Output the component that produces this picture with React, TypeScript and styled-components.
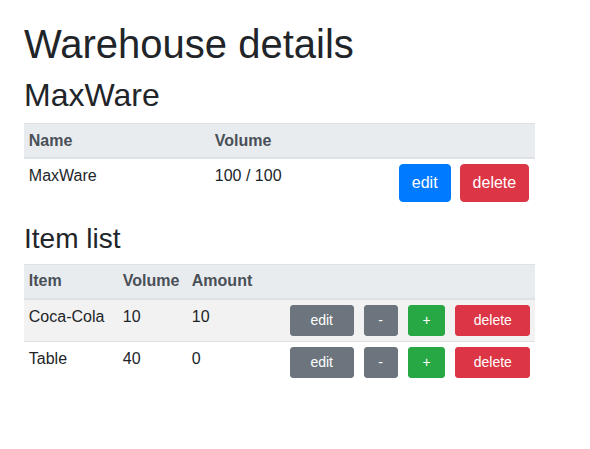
import React from 'react'
import styled, { createGlobalStyle } from 'styled-components'

const GlobalStyle = createGlobalStyle`
	body {
		margin: 0;
		background: #fff;
		color: #212529;
		font-family: 'Liberation Sans', Arial, sans-serif;
		font-size: 16px;
		line-height: 1.5;
	}
`

const COLORS = {
	primary: '#007bff',
	danger: '#dc3545',
	success: '#28a745',
	secondary: '#6c757d',
}

type Variant = keyof typeof COLORS

const Page = styled.main`
	width: 511px;
	padding: 19.5px 0 0 24px;
`

const Title = styled.h1`
	margin: 0 0 8px;
	font-size: 40px;
	font-weight: 500;
	line-height: 1.2;
`

const SubTitle = styled.h2`
	margin: 0 0 9px;
	font-size: 32px;
	font-weight: 500;
	line-height: 1.2;
`

const SectionTitle = styled.h3`
	margin: 0 0 8px;
	font-size: 28px;
	font-weight: 500;
	line-height: 1.2;
`

const Table = styled.table`
	width: 100%;
	margin-bottom: 15px;
	border-collapse: collapse;
	table-layout: fixed;
`

const Th = styled.th`
	padding: 4.8px;
	border-top: 1px solid #dee2e6;
	border-bottom: 2px solid #dee2e6;
	background: #e9ecef;
	color: #495057;
	font-weight: bold;
	text-align: left;
	vertical-align: bottom;
`

const Row = styled.tr<{ $striped?: boolean }>`
	background: ${(p) => (p.$striped ? 'rgba(0, 0, 0, 0.05)' : 'transparent')};
`

const Td = styled.td`
	padding: 4.8px;
	border-top: 1px solid #dee2e6;
	vertical-align: top;
`

const Actions = styled.div<{ $gap: number }>`
	display: flex;
	gap: ${(p) => p.$gap}px;
`

const Button = styled.button<{ $variant: Variant; $small?: boolean; $w?: number }>`
	box-sizing: border-box;
	width: ${(p) => (p.$w ? `${p.$w}px` : 'auto')};
	padding: ${(p) => (p.$small ? '4px 8px' : '6px 12px')};
	border: 1px solid ${(p) => COLORS[p.$variant]};
	border-radius: ${(p) => (p.$small ? '3px' : '4px')};
	background: ${(p) => COLORS[p.$variant]};
	color: #fff;
	font-family: inherit;
	font-size: ${(p) => (p.$small ? '14px' : '16px')};
	line-height: 1.5;
	text-align: center;
	cursor: pointer;
`

const items = [
	{ name: 'Coca-Cola', volume: 10, amount: 10 },
	{ name: 'Table', volume: 40, amount: 0 },
]

export default function App() {
	return (
		<>
			<GlobalStyle />
			<Page>
				<Title>Warehouse details</Title>
				<SubTitle>MaxWare</SubTitle>

				<Table>
					<colgroup>
						<col style={{ width: 186 }} />
						<col style={{ width: 184 }} />
						<col />
					</colgroup>
					<thead>
						<tr>
							<Th>Name</Th>
							<Th>Volume</Th>
							<Th />
						</tr>
					</thead>
					<tbody>
						<Row>
							<Td>MaxWare</Td>
							<Td>100 / 100</Td>
							<Td>
								<Actions $gap={9}>
									<Button $variant='primary'>edit</Button>
									<Button $variant='danger'>delete</Button>
								</Actions>
							</Td>
						</Row>
					</tbody>
				</Table>

				<SectionTitle>Item list</SectionTitle>
				<Table>
					<colgroup>
						<col style={{ width: 94 }} />
						<col style={{ width: 69 }} />
						<col style={{ width: 98 }} />
						<col />
					</colgroup>
					<thead>
						<tr>
							<Th>Item</Th>
							<Th>Volume</Th>
							<Th>Amount</Th>
							<Th />
						</tr>
					</thead>
					<tbody>
						{items.map((item, i) => (
							<Row key={item.name} $striped={i % 2 === 0}>
								<Td>{item.name}</Td>
								<Td>{item.volume}</Td>
								<Td>{item.amount}</Td>
								<Td>
									<Actions $gap={10}>
										<Button $variant='secondary' $small $w={64}>edit</Button>
										<Button $variant='secondary' $small $w={34}>-</Button>
										<Button $variant='success' $small $w={38}>+</Button>
										<Button $variant='danger' $small $w={75}>delete</Button>
									</Actions>
								</Td>
							</Row>
						))}
					</tbody>
				</Table>
			</Page>
		</>
	)
}
